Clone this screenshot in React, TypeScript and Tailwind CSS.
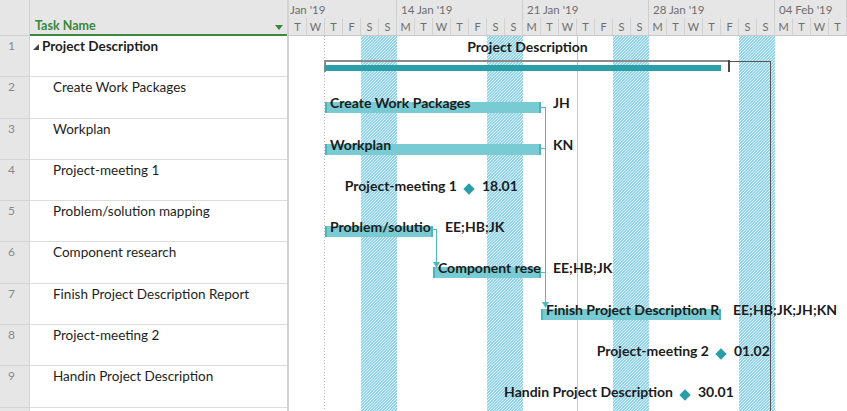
import React from 'react';

const DAY = 18;
const CHART_W = 558;
const BODY_H = 375;

type Task =
    | { kind: 'summary'; name: string }
    | { kind: 'bar'; name: string; shown: string; start: number; end: number; res: string }
    | { kind: 'milestone'; name: string; at: number; date: string };

const tasks: Task[] = [
    { kind: 'summary', name: 'Project Description' },
    { kind: 'bar', name: 'Create Work Packages', shown: 'Create Work Packages', start: 2, end: 14, res: 'JH' },
    { kind: 'bar', name: 'Workplan', shown: 'Workplan', start: 2, end: 14, res: 'KN' },
    { kind: 'milestone', name: 'Project-meeting 1', at: 10, date: '18.01' },
    { kind: 'bar', name: 'Problem/solution mapping', shown: 'Problem/solutio', start: 2, end: 8, res: 'EE;HB;JK' },
    { kind: 'bar', name: 'Component research', shown: 'Component rese', start: 8, end: 14, res: 'EE;HB;JK' },
    {
        kind: 'bar',
        name: 'Finish Project Description Report',
        shown: 'Finish Project Description R',
        start: 14,
        end: 24,
        res: 'EE;HB;JK;JH;KN',
    },
    { kind: 'milestone', name: 'Project-meeting 2', at: 24, date: '01.02' },
    { kind: 'milestone', name: 'Handin Project Description', at: 22, date: '30.01' },
];

const letters = 'MTWTFSS';
const days = Array.from({ length: 31 }, (_, i) => letters[(i + 1) % 7]);
const isWeekend = (i: number) => (i + 1) % 7 >= 5;

const weeks = [
    { label: "Jan '19", w: 'w-[108px]', pad: 'pl-[1px]' },
    { label: "14 Jan '19", w: 'w-[126px]', pad: 'pl-[4px]' },
    { label: "21 Jan '19", w: 'w-[126px]', pad: 'pl-[4px]' },
    { label: "28 Jan '19", w: 'w-[126px]', pad: 'pl-[4px]' },
    { label: "04 Feb '19", w: 'w-[72px]', pad: 'pl-[4px]' },
];

// light blue diagonal hatch for non-working days
const hatch =
    'bg-[#e4f5fc] [background-image:linear-gradient(135deg,#8fd3ef_25%,transparent_25%,transparent_50%,#8fd3ef_50%,#8fd3ef_75%,transparent_75%)] [background-size:3px_3px]';

const TaskList = () => (
    <div className="flex w-[289px] shrink-0">
        <div className="flex flex-col w-[287px]">
            <div className="flex h-[36px] bg-[#e6e6e6] shrink-0">
                <div className="w-[30px] border-r border-b border-[#cfcfcf]" />
                <div className="flex-1 flex items-end pl-[5px] pr-[4px] border-b-2 border-[#3b873b]">
                    <span className="flex-1 text-[12.5px] font-bold text-[#3b873b] leading-[14px] mb-[1px]">Task Name</span>
                    <svg width="8" height="5" className="mb-[4px]">
                        <polygon points="0,0 8,0 4,5" fill="#3b873b" />
                    </svg>
                </div>
            </div>
            {tasks.map((t, i) => (
                <div key={i} className="flex h-[41.3px] shrink-0">
                    <div className="w-[30px] bg-[#e6e6e6] border-r border-b border-[#d4d4d4] pl-[8px] pt-[2px] text-[12px] leading-[16px] text-[#8a8a8a]">
                        {i + 1}
                    </div>
                    <div className="flex-1 bg-white border-b border-[#dcdcdc] pt-[2px] text-[13.5px] leading-[16px] text-[#1e1e1e]">
                        {t.kind === 'summary' ? (
                            <div className="flex items-center pl-[3px]">
                                <svg width="6" height="6" className="mr-[3px] mt-[1px]">
                                    <polygon points="6,0 6,6 0,6" fill="#444" />
                                </svg>
                                <span className="font-bold">{t.name}</span>
                            </div>
                        ) : (
                            <div className="pl-[23px]">{t.name}</div>
                        )}
                    </div>
                </div>
            ))}
            <div className="flex h-[41.3px] shrink-0">
                <div className="w-[30px] bg-[#e6e6e6] border-r border-[#d4d4d4]" />
                <div className="flex-1 bg-white" />
            </div>
        </div>
        <div className="w-[2px] bg-[#d2d2d2]" />
    </div>
);

const Label = ({ left, children }: { left: number; children: React.ReactNode }) => (
    <div
        className="absolute top-[18px] whitespace-nowrap font-bold text-[14px] leading-[16px] text-[#1c1c1c]"
        style={{ left }}
    >
        {children}
    </div>
);

const ChartRow = ({ t }: { t: Task }) => {
    if (t.kind === 'summary') {
        return (
            <div className="relative h-[41.3px] shrink-0">
                <div className="absolute left-[36px] w-[405px] top-[3px] text-center font-bold text-[14px] leading-[16px] text-[#1c1c1c]">
                    {t.name}
                </div>
                <div className="absolute left-[35px] top-[24px] w-[406px] h-[2px] bg-[#8c8c8c]" />
                <div className="absolute left-[35px] top-[24px] w-[2px] h-[12px] bg-[#8c8c8c]" />
                <div className="absolute left-[36px] top-[29px] w-[396px] h-[6px] bg-[#29a0a9]" />
                <div className="absolute left-[439px] top-[24px] w-[2px] h-[12px] bg-[#4a4a4a]" />
                <div className="absolute left-[441px] top-[25px] w-[41px] h-px bg-[#555]" />
            </div>
        );
    }
    if (t.kind === 'bar') {
        const left = t.start * DAY;
        const width = (t.end - t.start) * DAY;
        return (
            <div className="relative h-[41.3px] shrink-0">
                <div
                    className="absolute top-[25px] h-[11px] bg-[#78cbd2] border-l-2 border-r-2 border-[#4cb4bd]"
                    style={{ left, width }}
                />
                <Label left={left + 5}>{t.shown}</Label>
                <Label left={left + width + 12}>{t.res}</Label>
            </div>
        );
    }
    const x = t.at * DAY;
    return (
        <div className="relative h-[41.3px] shrink-0">
            <div
                className="absolute top-[18px] -translate-x-full whitespace-nowrap font-bold text-[14px] leading-[16px] text-[#1c1c1c]"
                style={{ left: x - 12 }}
            >
                {t.name}
            </div>
            <div className="absolute top-[25px] w-[8px] h-[8px] rotate-45 bg-[#2a9ea8]" style={{ left: x - 4 }} />
            <Label left={x + 13}>{t.date}</Label>
        </div>
    );
};

const Chart = () => (
    <div className="flex flex-col w-[558px] shrink-0">
        <div className="h-[36px] bg-[#e6e6e6] border-b border-[#c8c8c8] shrink-0 text-[#6e6e6e]">
            <div className="flex h-[18px]">
                {weeks.map((w) => (
                    <div
                        key={w.label}
                        className={`${w.w} ${w.pad} shrink-0 border-r border-[#cdcdcd] pt-[1px] text-[11.5px] leading-[17px] whitespace-nowrap overflow-hidden`}
                    >
                        {w.label}
                    </div>
                ))}
            </div>
            <div className="flex h-[17px]">
                {days.map((d, i) => (
                    <div key={i} className="w-[18px] shrink-0 border-r border-[#d2d2d2] text-center text-[11px] leading-[17px]">
                        {d}
                    </div>
                ))}
            </div>
        </div>
        <div className="relative flex flex-col h-[375px] bg-white overflow-hidden">
            <div className="absolute inset-0 flex">
                {days.map((_, i) => (
                    <div key={i} className={`w-[18px] shrink-0 ${isWeekend(i) ? hatch : ''}`} />
                ))}
            </div>
            <svg className="absolute inset-0" width={CHART_W} height={BODY_H} shapeRendering="crispEdges">
                <line x1="35.5" y1="0" x2="35.5" y2={BODY_H} stroke="#b4b4b4" strokeDasharray="1 2" />
                <line x1="288.5" y1="0" x2="288.5" y2={BODY_H} stroke="#acd9a4" />
                <line x1="481.5" y1="25" x2="481.5" y2={BODY_H} stroke="#555" />
            </svg>
            {tasks.map((t, i) => (
                <ChartRow key={i} t={t} />
            ))}
            <svg className="absolute inset-0 pointer-events-none" width={CHART_W} height={BODY_H}>
                <g stroke="#4bbcc7" strokeWidth="1" fill="none" shapeRendering="crispEdges">
                    <polyline points="252,71.5 256.5,71.5 256.5,266" />
                    <line x1="252" y1="112.5" x2="256.5" y2="112.5" />
                    <line x1="252" y1="236.5" x2="256.5" y2="236.5" />
                    <polyline points="144,193.5 147.5,193.5 147.5,226" />
                </g>
                <polygon points="253,266 260,266 256.5,272" fill="#4bbcc7" />
                <polygon points="144,226 151,226 147.5,232" fill="#4bbcc7" />
            </svg>
        </div>
    </div>
);

export default function App() {
    return (
        <div className="flex w-[847px] h-[411px] overflow-hidden bg-white font-['Lato',sans-serif]">
            <TaskList />
            <Chart />
        </div>
    );
}
